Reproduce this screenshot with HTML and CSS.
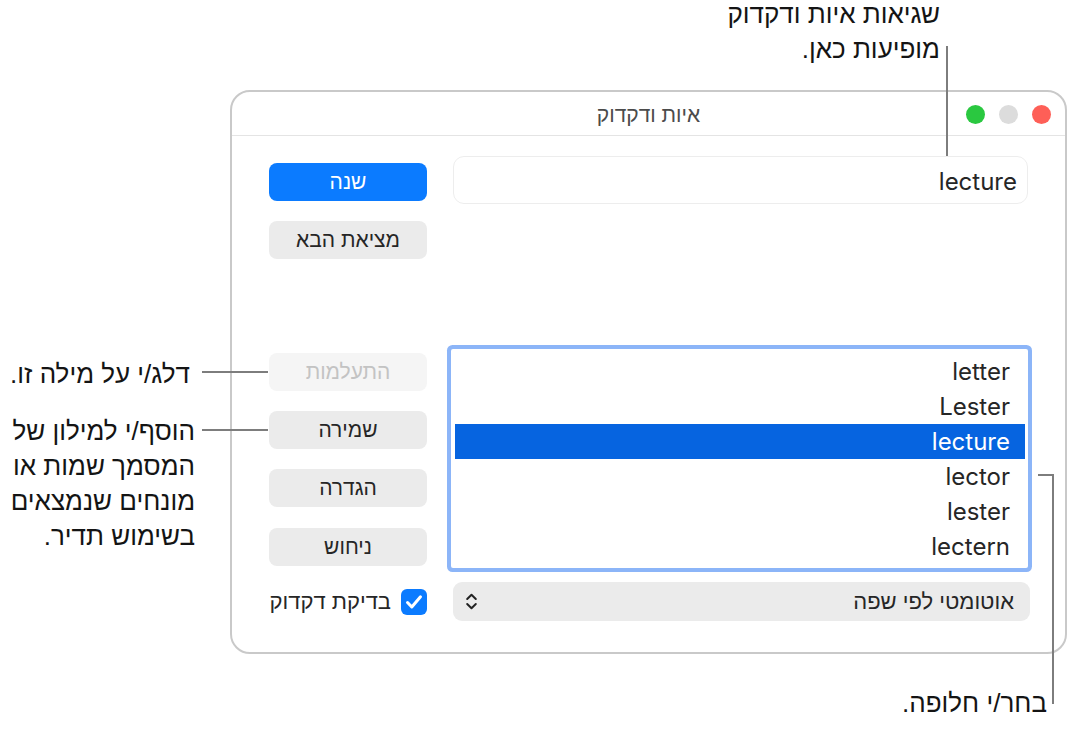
FILE: index.html
```html
<!DOCTYPE html>
<html lang="he">
<head>
<meta charset="utf-8">
<link rel="stylesheet" href="styles.css">
</head>
<body>
<div class="stage">
  <div class="callout callout-top" dir="rtl">שגיאות איות ודקדוק<br>מופיעות כאן.</div>
  <div class="leader leader-top"></div>

  <div class="callout callout-ignore" dir="rtl">דלג/י על מילה זו.</div>
  <div class="leader leader-ignore"></div>

  <div class="callout callout-learn" dir="rtl">הוסף/י למילון של<br>המסמך שמות או<br>מונחים שנמצאים<br>בשימוש תדיר.</div>
  <div class="leader leader-learn"></div>

  <div class="leader leader-choose-h"></div>
  <div class="leader leader-choose-v"></div>
  <div class="callout callout-choose" dir="rtl">בחר/י חלופה.</div>

  <div class="window" dir="rtl">
    <div class="titlebar">
      <div class="lights">
        <span class="light red"></span>
        <span class="light gray"></span>
        <span class="light green"></span>
      </div>
      <div class="title">איות ודקדוק</div>
      <div></div>
    </div>
    <div class="content">
      <div class="main">
        <div class="field" dir="ltr">lecture</div>
        <div class="list" dir="ltr">
          <div class="row">letter</div>
          <div class="row">Lester</div>
          <div class="row selected">lecture</div>
          <div class="row">lector</div>
          <div class="row">lester</div>
          <div class="row">lectern</div>
        </div>
        <div class="popup">
          <span class="popup-label">אוטומטי לפי שפה</span>
          <svg class="chevron" width="13" height="19" viewBox="0 0 13 19"><path d="M2.2 7 L6.5 2.8 L10.8 7 M2.2 12 L6.5 16.2 L10.8 12" fill="none" stroke="#222" stroke-width="2" stroke-linecap="round" stroke-linejoin="round"/></svg>
        </div>
      </div>
      <div class="side">
        <div class="btn primary">שנה</div>
        <div class="btn gap-s">מציאת הבא</div>
        <div class="btn disabled gap-l">התעלמות</div>
        <div class="btn gap-s">שמירה</div>
        <div class="btn gap-s">הגדרה</div>
        <div class="btn gap-s last">ניחוש</div>
        <div class="check-row">
          <span class="checkbox"><svg width="26" height="26" viewBox="0 0 26 26"><path d="M6.5 13.5 L10.8 18 L19.5 7.8" fill="none" stroke="#fff" stroke-width="3" stroke-linecap="round" stroke-linejoin="round"/></svg></span>
          <span class="check-label">בדיקת דקדוק</span>
        </div>
      </div>
    </div>
  </div>
</div>
</body>
</html>
```

FILE: styles.css
```css
* { box-sizing: border-box; }
html, body { margin: 0; padding: 0; background: #fff; }
body {
  width: 1072px;
  height: 729px;
  overflow: hidden;
  font-family: Inter, "Liberation Sans", sans-serif;
  color: #1d1d1d;
}
.stage {
  position: relative;
  width: 1072px;
  height: 729px;
  padding-top: 90px;
  padding-left: 230px;
}

/* callouts */
.callout {
  position: absolute;
  font-family: "Liberation Sans", sans-serif;
  font-size: 26px;
  line-height: 35px;
  color: #141414;
  text-align: right;
  white-space: nowrap;
}
.callout-top { right: 132px; top: -3px; }
.callout-ignore { right: 882px; top: 357px; }
.callout-learn { right: 877px; top: 414px; }
.callout-choose { right: 25px; top: 686px; }

.leader { position: absolute; background: #7d7d7d; }
.leader-top { left: 946px; top: 46px; width: 2px; height: 110px; }
.leader-ignore { left: 202px; top: 371px; width: 66px; height: 2px; }
.leader-learn { left: 202px; top: 429px; width: 66px; height: 2px; }
.leader-choose-h { left: 1038px; top: 474px; width: 16px; height: 2px; }
.leader-choose-v { left: 1052px; top: 474px; width: 2px; height: 230px; }

/* window */
.window {
  width: 837px;
  height: 564px;
  border: 2px solid #c9c9c9;
  border-radius: 20px;
  background: #fff;
  overflow: hidden;
}
.titlebar {
  height: 44px;
  border-bottom: 1px solid #e4e4e4;
  display: grid;
  grid-template-columns: 1fr auto 1fr;
  align-items: center;
}
.lights {
  display: flex;
  gap: 14px;
  padding-right: 14px;
  padding-top: 2px;
}
.light { width: 19px; height: 19px; border-radius: 50%; display: block; }
.red { background: #fe5f57; }
.gray { background: #dcdcdc; }
.green { background: #2ac840; }
.title {
  font-family: "Liberation Sans", sans-serif;
  font-size: 21px;
  color: #4b4b4b;
  padding-top: 2px;
}

.content {
  display: flex;
  gap: 26px;
  padding: 20px 37px 0 37px;
}
.main { width: 575px; display: flex; flex-direction: column; }
.side { width: 158px; display: flex; flex-direction: column; padding-top: 7px; }

.field {
  height: 48px;
  border: 1.5px solid #ededed;
  border-radius: 11px;
  font-size: 24px;
  color: #262626;
  text-align: right;
  padding: 2px 10px 0 10px;
  line-height: 45px;
}
.list {
  margin-top: 145px;
  height: 219px;
  width: 577px;
  box-shadow: 0 0 0 4px #8cb5f8;
  background: #fff;
  padding: 5px 3px 4px 4px;
  border-radius: 2px;
}
.row {
  height: 35px;
  line-height: 35px;
  font-size: 24px;
  text-align: right;
  padding-right: 15px;
  color: #262626;
}
.row.selected { background: #0664e0; color: #fff; }

.popup {
  margin-top: 14px;
  margin-right: -2px;
  height: 39px;
  border-radius: 9px;
  background: #ebebeb;
  display: flex;
  align-items: center;
  justify-content: space-between;
  padding: 0 16px 0 12px;
}
.popup-label {
  font-family: "Liberation Sans", sans-serif;
  font-size: 22px;
  color: #262626;
}
.chevron { display: block; }

.btn {
  height: 38px;
  border-radius: 8px;
  background: #ebebeb;
  font-family: "Liberation Sans", sans-serif;
  font-size: 21px;
  color: #262626;
  display: flex;
  align-items: center;
  justify-content: center;
}
.btn.primary { background: #0b7bff; color: #fff; }
.btn.disabled { background: #f5f5f5; color: #c3c3c3; }
.gap-s { margin-top: 20px; }
.gap-l { margin-top: 94px; }
.btn.last { margin-top: 21px; }

.check-row {
  margin-top: 23px;
  display: flex;
  align-items: center;
  gap: 10px;
}
.checkbox {
  width: 26px;
  height: 26px;
  border-radius: 6px;
  background: #0b7bff;
  display: block;
}
.checkbox svg { display: block; }
.check-label {
  font-family: "Liberation Sans", sans-serif;
  font-size: 22px;
  color: #262626;
}
```
